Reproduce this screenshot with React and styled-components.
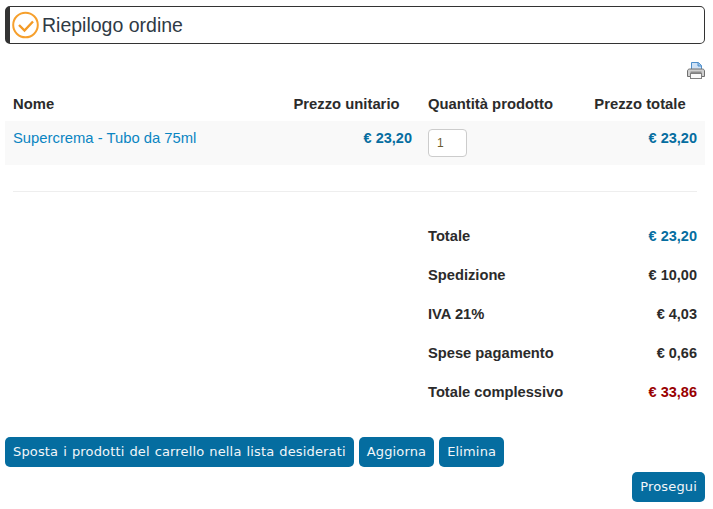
import React from "react";
import styled, { createGlobalStyle } from "styled-components";

const Global = createGlobalStyle`
  html, body { margin: 0; padding: 0; background: #fff; }
  body { font-family: "Liberation Sans", Arial, sans-serif; font-size: 14.7px; color: #2b2b2b; }
`;

const Page = styled.div`
  width: 700px;
  padding: 6px 8px 0 5px;
`;

const TitleBar = styled.div`
  height: 36px;
  border: 1px solid #333;
  border-left-width: 5px;
  border-radius: 5px;
  display: flex;
  align-items: center;
  gap: 2px;
  overflow: hidden;
`;

const Title = styled.h1`
  margin: 0;
  font-size: 19.5px;
  font-weight: 400;
  color: #2f3a45;
`;

const PrintRow = styled.div`
  display: flex;
  justify-content: flex-end;
  height: 44px;
  padding-top: 18px;
  box-sizing: border-box;
`;

const Row = styled.div`
  display: grid;
  grid-template-columns: 268px 147px 155px 130px;
  height: ${(p) => p.$h || 39}px;
  background: ${(p) => p.$bg || "transparent"};
`;

const HeadCell = styled.div`
  font-size: 14.8px;
  font-weight: 700;
  line-height: 16px;
  padding: 8px 8px 0;
  text-align: ${(p) => p.$a || "left"};
  color: #2b2b2b;
  white-space: nowrap;
`;

const Cell = styled.div`
  padding: 9px 8px 0;
  line-height: 16px;
  text-align: ${(p) => p.$a || "left"};
  color: ${(p) => p.$c || "#2b2b2b"};
  font-weight: ${(p) => (p.$b ? 700 : 400)};
  white-space: nowrap;
`;

const Price = styled(Cell)`
  font-size: 14.5px;
  font-weight: 700;
  text-align: right;
`;

const ProductLink = styled.a`
  font-size: 14.8px;
  color: #0a85c2;
  text-decoration: none;
`;

const QtyInput = styled.input`
  width: 39px;
  height: 28px;
  box-sizing: border-box;
  border: 1px solid #ccc;
  border-radius: 4px;
  padding: 0 8px;
  margin: -1px 0 0;
  font: 12px "Liberation Sans", Arial, sans-serif;
  color: #6b5a2e;
  background: #fff;
  display: block;
`;

const Divider = styled.hr`
  border: 0;
  border-top: 1px solid #eee;
  margin: 26px 8px 27px;
`;

const Summary = styled.div`
  display: flex;
  flex-direction: column;
`;

const Buttons = styled.div`
  display: flex;
  gap: 5px;
  margin-top: 23px;
`;

const Footer = styled.div`
  display: flex;
  justify-content: flex-end;
  margin-top: 5px;
`;

const Button = styled.button`
  height: 30px;
  padding: 0 8px;
  border: 0;
  border-radius: 5px;
  background: #056da0;
  color: #f2f6f9;
  font: 13px "DejaVu Sans", Verdana, sans-serif;
  letter-spacing: 0.15px;
  word-spacing: 0.7px;
  line-height: 30px;
  white-space: nowrap;
`;

const CheckIcon = () => (
  <svg width="30" height="44" viewBox="0 0 30 44" style={{ flex: "none", marginTop: 14 }}>
    <circle cx="15.5" cy="15" r="12.3" fill="none" stroke="#f6a02d" strokeWidth="2" />
    <path d="M9 15l5.5 5.5 8.5-9" fill="none" stroke="#f39a26" strokeWidth="2.4" />
    <circle cx="15.5" cy="47" r="12" fill="none" stroke="#fbe8cf" strokeWidth="1.6" />
  </svg>
);

const PrinterIcon = () => (
  <svg width="18" height="17" viewBox="0 0 18 17">
    <path d="M4.5 .5h7L14.5 3.5V9h-10z" fill="#cfe2f6" stroke="#4f8fcb" />
    <path d="M11 .5V4H14.5" fill="#9cc4ea" stroke="#4f8fcb" />
    <path d="M.5 9C.5 7.8 1.5 7 2.5 7H15.5C16.5 7 17.5 7.8 17.5 9V14.5H.5Z" fill="#cfcfcf" stroke="#707070" />
    <rect x="3.5" y="9.5" width="11" height="2" fill="#8c8c8c" />
    <rect x="3.5" y="11.5" width="11" height="5" fill="#fafafa" stroke="#808080" />
  </svg>
);

const summary = [
  ["Totale", "€ 23,20", "#056da0"],
  ["Spedizione", "€ 10,00", "#2b2b2b"],
  ["IVA 21%", "€ 4,03", "#2b2b2b"],
  ["Spese pagamento", "€ 0,66", "#2b2b2b"],
  ["Totale complessivo", "€ 33,86", "#990000"],
];

export default function App() {
  return (
    <Page>
      <Global />
      <TitleBar>
        <CheckIcon />
        <Title>Riepilogo ordine</Title>
      </TitleBar>
      <PrintRow>
        <PrinterIcon />
      </PrintRow>
      <Row $h={33}>
        <HeadCell>Nome</HeadCell>
        <HeadCell $a="center">Prezzo unitario</HeadCell>
        <HeadCell>Quantità prodotto</HeadCell>
        <HeadCell $a="center">Prezzo totale</HeadCell>
      </Row>
      <Row $h={44} $bg="#f9f9f9">
        <Cell><ProductLink href="#">Supercrema - Tubo da 75ml</ProductLink></Cell>
        <Price $c="#056da0">€ 23,20</Price>
        <Cell><QtyInput defaultValue="1" /></Cell>
        <Price $c="#056da0">€ 23,20</Price>
      </Row>
      <Divider />
      <Summary>
        {summary.map(([label, value, color]) => (
          <Row key={label}>
            <span />
            <span />
            <Cell $b>{label}</Cell>
            <Price $c={color}>{value}</Price>
          </Row>
        ))}
      </Summary>
      <Buttons>
        <Button>Sposta i prodotti del carrello nella lista desiderati</Button>
        <Button>Aggiorna</Button>
        <Button>Elimina</Button>
      </Buttons>
      <Footer>
        <Button>Prosegui</Button>
      </Footer>
    </Page>
  );
}
